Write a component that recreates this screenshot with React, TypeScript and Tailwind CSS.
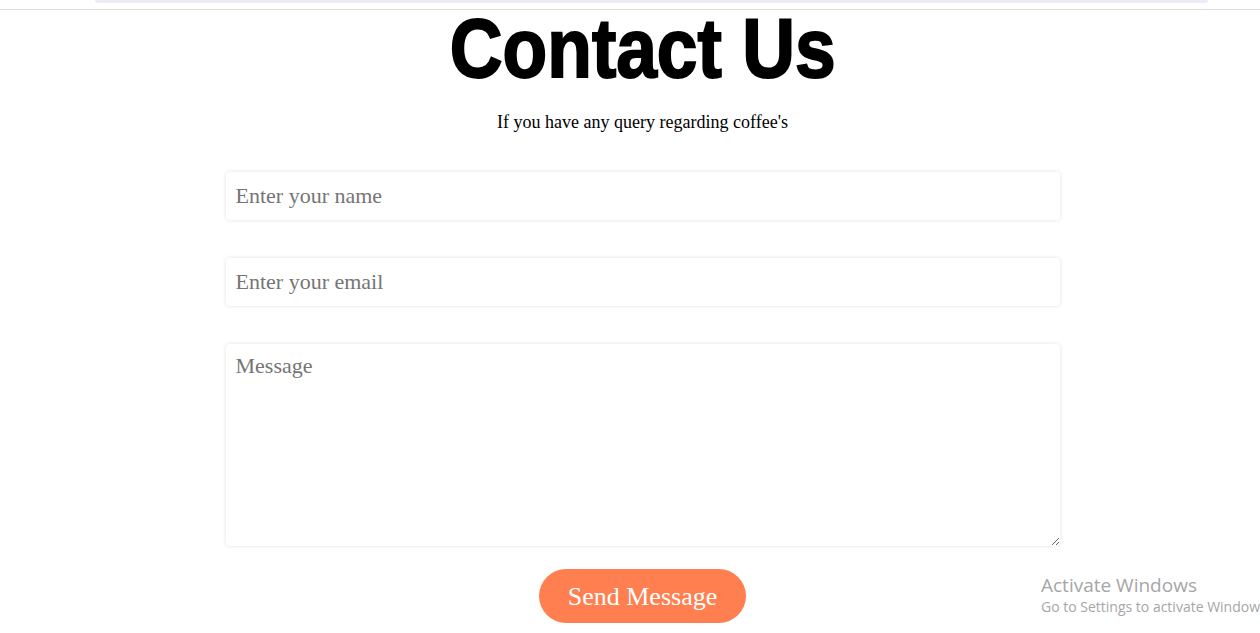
import React from "react";

export default function App() {
  return (
    <div className="relative min-h-[633px] w-full overflow-hidden bg-white">
      <div className="mx-[95px] h-[3px] rounded-b-md bg-[#ecebf7] w-[1113px]" />
      <div className="mt-[6px] h-px w-full bg-[#dcdcdc]" />
      <div className="flex flex-col items-center pl-[25px]">
        <h1 className="mt-0 scale-x-[0.87] text-[84px] leading-[76px] font-bold text-black [font-family:'Liberation_Sans',sans-serif] [-webkit-text-stroke:2px_black]">
          Contact Us
        </h1>
        <p className="mt-[26px] text-[18px] leading-[20px] text-black [font-family:'Liberation_Serif',serif]">
          If you have any query regarding coffee's
        </p>
        <form className="mt-[40px] flex w-[834px] flex-col items-center">
          <input
            className="h-[48px] w-full rounded-[4px] bg-white px-[10px] text-[22px] shadow-[0_0_4px_rgba(0,0,0,0.12)] outline-none placeholder:text-[#757575] [font-family:'Liberation_Serif',serif]"
            placeholder="Enter your name"
          />
          <input
            className="mt-[38px] h-[48px] w-full rounded-[4px] bg-white px-[10px] text-[22px] shadow-[0_0_4px_rgba(0,0,0,0.12)] outline-none placeholder:text-[#757575] [font-family:'Liberation_Serif',serif]"
            placeholder="Enter your email"
          />
          <textarea
            className="mt-[38px] h-[202px] w-full rounded-[4px] bg-white px-[10px] py-[9px] text-[22px] leading-[26px] shadow-[0_0_4px_rgba(0,0,0,0.12)] outline-none placeholder:text-[#757575] [font-family:'Liberation_Serif',serif]"
            placeholder="Message"
          />
          <button
            type="button"
            className="mt-[23px] h-[54px] w-[207px] rounded-full bg-[#ff7f50] text-[26px] text-white [font-family:'Liberation_Serif',serif]"
          >
            Send Message
          </button>
        </form>
      </div>
      <div className="pointer-events-none absolute left-[1041px] top-[573px] whitespace-nowrap text-[#a6a6a6] [font-family:'Open_Sans',sans-serif]">
        <div className="text-[19px] leading-[24px]">Activate Windows</div>
        <div className="text-[14px] leading-[20px]">Go to Settings to activate Windows.</div>
      </div>
    </div>
  );
}
